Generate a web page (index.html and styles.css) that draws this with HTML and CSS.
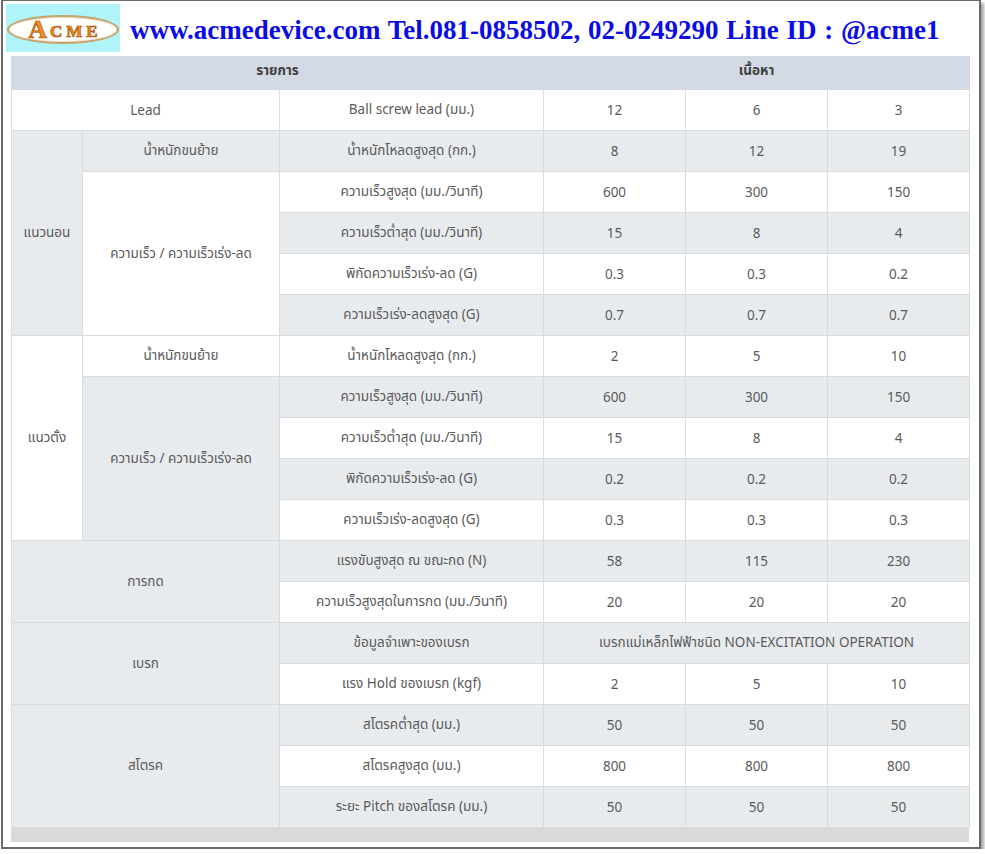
FILE: index.html
```html
<!DOCTYPE html>
<html lang="th">
<head>
<meta charset="utf-8">
<title>ACME Ball screw spec</title>
<link rel="stylesheet" href="styles.css">
</head>
<body>
<div class="frame">
  <div class="banner">
    <div class="logo">
      <div class="oval"><span class="big">A</span><span class="small">CME</span></div>
    </div>
    <div class="contact">www.acmedevice.com Tel.081-0858502, 02-0249290 Line ID : @acme1</div>
  </div>
  <table class="spec">
    <colgroup>
      <col class="c1"><col class="c2"><col class="c3"><col class="c4"><col class="c5"><col class="c6">
    </colgroup>
    <thead>
      <tr class="head"><th colspan="3">รายการ</th><th colspan="3" class="sep">เนื้อหา</th></tr>
    </thead>
    <tbody>
      <tr class="w"><td colspan="2">Lead</td><td>Ball screw lead (มม.)</td><td>12</td><td>6</td><td>3</td></tr>
      <tr class="g"><td rowspan="5">แนวนอน</td><td>น้ำหนักขนย้าย</td><td>น้ำหนักโหลดสูงสุด (กก.)</td><td>8</td><td>12</td><td>19</td></tr>
      <tr class="w"><td rowspan="4">ความเร็ว / ความเร็วเร่ง-ลด</td><td>ความเร็วสูงสุด (มม./วินาที)</td><td>600</td><td>300</td><td>150</td></tr>
      <tr class="g"><td>ความเร็วต่ำสุด (มม./วินาที)</td><td>15</td><td>8</td><td>4</td></tr>
      <tr class="w"><td>พิกัดความเร็วเร่ง-ลด (G)</td><td>0.3</td><td>0.3</td><td>0.2</td></tr>
      <tr class="g"><td>ความเร็วเร่ง-ลดสูงสุด (G)</td><td>0.7</td><td>0.7</td><td>0.7</td></tr>
      <tr class="w"><td rowspan="5">แนวตั้ง</td><td>น้ำหนักขนย้าย</td><td>น้ำหนักโหลดสูงสุด (กก.)</td><td>2</td><td>5</td><td>10</td></tr>
      <tr class="g"><td rowspan="4">ความเร็ว / ความเร็วเร่ง-ลด</td><td>ความเร็วสูงสุด (มม./วินาที)</td><td>600</td><td>300</td><td>150</td></tr>
      <tr class="w"><td>ความเร็วต่ำสุด (มม./วินาที)</td><td>15</td><td>8</td><td>4</td></tr>
      <tr class="g"><td>พิกัดความเร็วเร่ง-ลด (G)</td><td>0.2</td><td>0.2</td><td>0.2</td></tr>
      <tr class="w"><td>ความเร็วเร่ง-ลดสูงสุด (G)</td><td>0.3</td><td>0.3</td><td>0.3</td></tr>
      <tr class="g"><td colspan="2" rowspan="2">การกด</td><td>แรงขับสูงสุด ณ ขณะกด (N)</td><td>58</td><td>115</td><td>230</td></tr>
      <tr class="w"><td>ความเร็วสูงสุดในการกด (มม./วินาที)</td><td>20</td><td>20</td><td>20</td></tr>
      <tr class="g"><td colspan="2" rowspan="2">เบรก</td><td>ข้อมูลจำเพาะของเบรก</td><td colspan="3">เบรกแม่เหล็กไฟฟ้าชนิด NON-EXCITATION OPERATION</td></tr>
      <tr class="w"><td>แรง Hold ของเบรก (kgf)</td><td>2</td><td>5</td><td>10</td></tr>
      <tr class="g"><td colspan="2" rowspan="3">สโตรค</td><td>สโตรคต่ำสุด (มม.)</td><td>50</td><td>50</td><td>50</td></tr>
      <tr class="w"><td>สโตรคสูงสุด (มม.)</td><td>800</td><td>800</td><td>800</td></tr>
      <tr class="g"><td>ระยะ Pitch ของสโตรค (มม.)</td><td>50</td><td>50</td><td>50</td></tr>
    </tbody>
  </table>
  <div class="footbar"></div>
</div>
</body>
</html>
```

FILE: styles.css
```css
html, body {
  margin: 0;
  padding: 0;
  background: #ffffff;
}

.frame {
  margin-left: 1px;
  width: 976px;
  height: 846px;
  border: 2px solid #6a6a6a;
  border-top-width: 1px;
  background: #ffffff;
  box-shadow: 3px 3px 3px rgba(0, 0, 0, 0.35);
  overflow: hidden;
}

.banner {
  display: flex;
  align-items: center;
  height: 48px;
  margin-top: 3px;
  margin-left: 3px;
}

.logo {
  width: 114px;
  height: 48px;
  background: #aef4f9;
  display: flex;
  align-items: center;
  justify-content: center;
}

.oval {
  width: 108px;
  height: 25px;
  border: 2px solid #c9a36e;
  border-radius: 50%;
  background: #ffffff;
  box-shadow: inset 0 0 0 1px #efe0c6;
  display: flex;
  align-items: center;
  justify-content: center;
  font-family: "Liberation Serif", "DejaVu Serif", serif;
  font-weight: bold;
  color: #f3901a;
  -webkit-text-stroke: 0.7px #a9520c;
  margin-top: 3px;
}

.oval .big {
  font-size: 26px;
  line-height: 1;
  margin-right: 3px;
}

.oval .small {
  font-size: 17px;
  line-height: 1;
  letter-spacing: 4px;
  margin-right: -4px;
  margin-top: 3px;
}

.contact {
  margin-left: 10px;
  margin-top: 5px;
  font-family: "Liberation Serif", "Times New Roman", serif;
  font-weight: bold;
  font-size: 27px;
  word-spacing: 1px;
  color: #0b0be6;
  white-space: nowrap;
}

.spec {
  margin-top: 4px;
  margin-left: 8px;
  width: 958px;
  border-collapse: collapse;
  table-layout: fixed;
  font-family: "Noto Sans", "Noto Sans Thai", "DejaVu Sans", sans-serif;
  font-size: 13.5px;
  color: #5a5a5a;
}

.c1 { width: 71px; }
.c2 { width: 197px; }
.c3 { width: 264px; }
.c4 { width: 142px; }
.c5 { width: 142px; }
.c6 { width: 142px; }

.spec th,
.spec td {
  text-align: center;
  vertical-align: middle;
  padding: 0;
  border: 1px solid #d9dbdd;
}

.spec .head th {
  height: 33px;
  padding-bottom: 4px;
  box-sizing: border-box;
  background: #d3dae3;
  color: #3f3f3f;
  font-weight: bold;
  border-color: #d3dae3;
}

.spec .head th.sep {
  border-left: 1px solid #ffffff;
}

.spec tbody tr {
  height: 41px;
}

.spec tr.w {
  background: #ffffff;
}

.spec tr.g {
  background: #e8ebee;
}

.footbar {
  margin-left: 8px;
  width: 958px;
  height: 14px;
  background: #d9d9d9;
}
```
